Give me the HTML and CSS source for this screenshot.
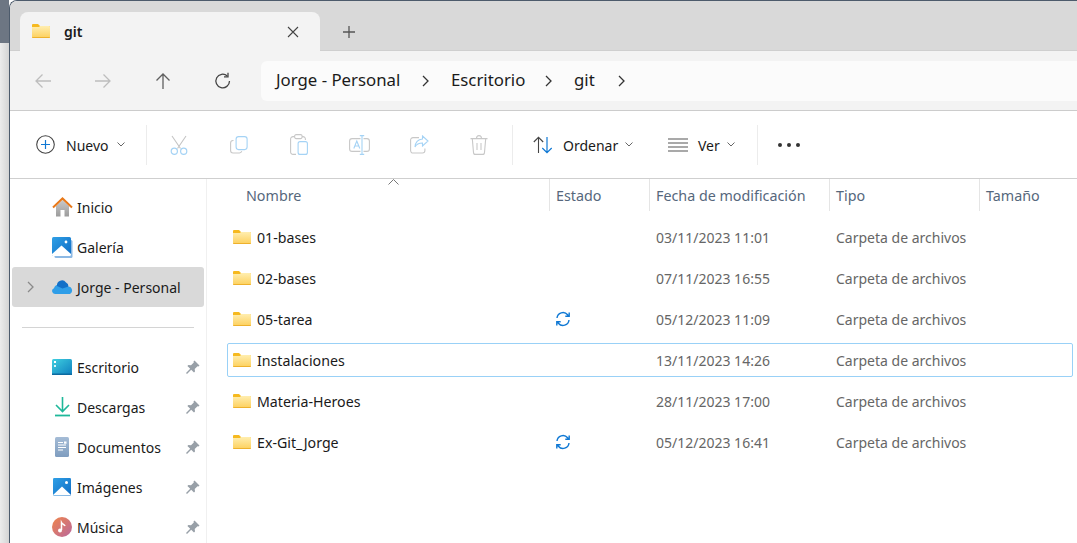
FILE: index.html
```html
<html>
  <head>
    <title>git</title>
    <meta name="viewport" content="width=device-width, initial-scale=1.0">
    <link rel="stylesheet" href="styles.css">
  </head>
  <body>
    <svg class="defs" width="0" height="0">
      <defs>
        <linearGradient id="folder-fill" x1="0" y1="0" x2="0" y2="1">
          <stop offset="0" stop-color="#ffeeb0"/>
          <stop offset="1" stop-color="#fdd05c"/>
        </linearGradient>
        <linearGradient id="home-fill" x1="0" y1="0" x2="0" y2="1">
          <stop offset="0" stop-color="#c9c9c9"/>
          <stop offset="1" stop-color="#9c9c9c"/>
        </linearGradient>
        <linearGradient id="sky-fill" x1="0" y1="0" x2="1" y2="1">
          <stop offset="0" stop-color="#2fa0e6"/>
          <stop offset="1" stop-color="#0f6cc4"/>
        </linearGradient>
        <linearGradient id="desk-fill" x1="0" y1="0" x2="1" y2="1">
          <stop offset="0" stop-color="#3fd0e0"/>
          <stop offset="1" stop-color="#0f7fbf"/>
        </linearGradient>
        <linearGradient id="doc-fill" x1="0" y1="0" x2="0" y2="1">
          <stop offset="0" stop-color="#a5bcd6"/>
          <stop offset="1" stop-color="#7f9dbf"/>
        </linearGradient>
        <linearGradient id="music-fill" x1="0" y1="0" x2="1" y2="1">
          <stop offset="0" stop-color="#f0854a"/>
          <stop offset="1" stop-color="#b9689f"/>
        </linearGradient>
        <symbol id="folder" viewBox="0 0 18 14">
          <path d="M0 1a1 1 0 0 1 1-1h5l2 2h9a1 1 0 0 1 1 1v3H0z" fill="#f6b91f"/>
          <path d="M0 3h7l1-1h9a1 1 0 0 1 1 1v10a1 1 0 0 1-1 1H1a1 1 0 0 1-1-1z" fill="url(#folder-fill)"/>
          <path d="M0 13h18a1 1 0 0 1-1 1H1a1 1 0 0 1-1-1z" fill="#eeb12c"/>
        </symbol>
        <symbol id="sync" viewBox="0 0 16 16">
          <path d="M2 7a6 6 0 0 1 10.6-3.2L14 5.2M14.2 1.4v3.9h-3.9M14 9a6 6 0 0 1-10.6 3.2L2 10.8M1.8 14.600v-3.900h3.900" fill="none" stroke="#0f78d4" stroke-width="1.400"/>
        </symbol>
        <symbol id="pin" viewBox="0 0 14 14">
          <path d="M8.500 0.500l5 5-1 1-1-.3-2.800 2.800.3 2.600-1 1-2.800-2.800L1 14l-1-1 4.200-4.200L1.400 6l1-1 2.600.3 2.800-2.800-.3-1z" fill="#98a0a8"/>
        </symbol>
        <symbol id="chev-down" viewBox="0 0 8 5">
          <path d="M.5.500L4 4 7.500.500" fill="none" stroke="#666" stroke-width="1"/>
        </symbol>
        <symbol id="chev-right" viewBox="0 0 7 12">
          <path d="M1 1l5 5-5 5" fill="none" stroke="#333" stroke-width="1.300"/>
        </symbol>
      </defs>
    </svg>

    <div class="desktop">
      <div class="desktop-top"></div>
      <div class="desktop-bottom"></div>
    </div>

    <div class="window">
      <div class="tabbar">
        <div class="tab">
          <svg class="tab-folder" width="18" height="14"><use href="#folder"/></svg>
          <span class="tab-title">git</span>
          <svg class="tab-close" width="12" height="12" viewBox="0 0 12 12"><path d="M1 1l10 10M11 1L1 11" stroke="#444" stroke-width="1.100"/></svg>
        </div>
        <svg class="tab-add" width="14" height="14" viewBox="0 0 14 14"><path d="M7 1v12M1 7h12" stroke="#555" stroke-width="1.300"/></svg>
      </div>

      <div class="navbar">
        <div class="nav-btn">
          <svg width="18" height="16" viewBox="0 0 18 16"><path d="M17 8H2M8.500 1.500L2 8l6.500 6.500" fill="none" stroke="#bdbdbd" stroke-width="1.300"/></svg>
        </div>
        <div class="nav-btn">
          <svg width="18" height="16" viewBox="0 0 18 16"><path d="M1 8h15M9.500 1.500L16 8l-6.500 6.500" fill="none" stroke="#bdbdbd" stroke-width="1.300"/></svg>
        </div>
        <div class="nav-btn">
          <svg width="16" height="18" viewBox="0 0 16 18"><path d="M8 17V2M1.500 8.500L8 2l6.500 6.500" fill="none" stroke="#5f5f5f" stroke-width="1.300"/></svg>
        </div>
        <div class="nav-btn">
          <svg width="18" height="18" viewBox="0 0 18 18"><path d="M15.500 9a6.800 6.800 0 1 1-2.200-5" fill="none" stroke="#444" stroke-width="1.300"/><path d="M14 .8v4h-4" fill="none" stroke="#444" stroke-width="1.300"/></svg>
        </div>
        <div class="address">
          <span class="crumb crumb-home">Jorge - Personal</span>
          <svg class="crumb-sep" width="7" height="12"><use href="#chev-right"/></svg>
          <span class="crumb crumb-desk">Escritorio</span>
          <svg class="crumb-sep" width="7" height="12"><use href="#chev-right"/></svg>
          <span class="crumb crumb-git">git</span>
          <svg class="crumb-sep" width="7" height="12"><use href="#chev-right"/></svg>
        </div>
      </div>

      <div class="toolbar">
        <div class="tool-new">
          <svg class="new-icon" width="19" height="19" viewBox="0 0 19 19"><circle cx="9.500" cy="9.500" r="8.800" fill="none" stroke="#444" stroke-width="1.100"/><path d="M9.500 5v9M5 9.500h9" stroke="#0f78d4" stroke-width="1.200"/></svg>
          <span class="tool-label label-new">Nuevo</span>
          <svg class="tool-chev" width="8" height="5"><use href="#chev-down"/></svg>
        </div>
        <div class="tool-sep"></div>
        <div class="tool-btn">
          <svg width="18" height="20" viewBox="0 0 18 20"><path d="M2 1l8.500 12.500M16 1L7.500 13.500" fill="none" stroke="#c4c4c4" stroke-width="1.100"/><circle cx="4.300" cy="16.300" r="3.100" fill="none" stroke="#a5d3f5" stroke-width="1.200"/><circle cx="13.700" cy="16.300" r="3.100" fill="none" stroke="#a5d3f5" stroke-width="1.200"/></svg>
        </div>
        <div class="tool-btn">
          <svg width="18" height="18" viewBox="0 0 18 18"><path d="M3.500 4.500h-.5A2.500 2.500 0 0 0 .6 7v7.500A2.500 2.500 0 0 0 3 17h6.500a2.500 2.500 0 0 0 2.300-1.800" fill="none" stroke="#c8c8c8" stroke-width="1.100"/><rect x="6.100" y=".6" width="11" height="13" rx="2.500" fill="#fff" stroke="#a5d3f5" stroke-width="1.100"/></svg>
        </div>
        <div class="tool-btn">
          <svg width="18" height="21" viewBox="0 0 18 21"><path d="M4.500 2.600H3A2.400 2.400 0 0 0 .6 5v13A2.400 2.400 0 0 0 3 20.400h3M12 2.600h1A2.400 2.400 0 0 1 15.400 5v1" fill="none" stroke="#c8c8c8" stroke-width="1.100"/><rect x="4.600" y=".6" width="7.500" height="4" rx="1.500" fill="#fff" stroke="#c8c8c8" stroke-width="1.100"/><rect x="8.100" y="7.600" width="9.300" height="12.800" rx="2" fill="#fff" stroke="#a5d3f5" stroke-width="1.100"/></svg>
        </div>
        <div class="tool-btn">
          <svg width="21" height="20" viewBox="0 0 21 20"><rect x=".6" y="3.600" width="19.800" height="12.800" rx="2.500" fill="none" stroke="#c8c8c8" stroke-width="1.100"/><path d="M13 .6v18.800M10.800.6h4.400M10.800 19.400h4.400" fill="none" stroke="#fff" stroke-width="3"/><path d="M13 .6v18.800M10.800.6h4.400M10.800 19.400h4.400" fill="none" stroke="#a5d3f5" stroke-width="1.100"/><path d="M4.800 13.500L7.800 6l3 7.500M5.800 11h4" fill="none" stroke="#a5d3f5" stroke-width="1.100"/></svg>
        </div>
        <div class="tool-btn">
          <svg width="19" height="19" viewBox="0 0 19 19"><path d="M9 2.600H3A2.400 2.400 0 0 0 .6 5v10.500A2.400 2.400 0 0 0 3 18h9.500a2.400 2.400 0 0 0 2.400-2.400v-2" fill="none" stroke="#c8c8c8" stroke-width="1.100"/><path d="M12.500 1l5.500 5-5.500 5V8c-3.500 0-6 1-7.500 4 .3-4.500 3-7.500 7.500-8z" fill="#fff" stroke="#a5d3f5" stroke-width="1.100"/></svg>
        </div>
        <div class="tool-btn">
          <svg width="18" height="20" viewBox="0 0 18 20"><path d="M.5 3.600h17M6.500 3.600c0-1.800 1-3 2.500-3s2.500 1.200 2.500 3M2.300 3.600l1.200 13.800a2 2 0 0 0 2 2h7a2 2 0 0 0 2-2l1.200-13.800M7 8v7M11 8v7" fill="none" stroke="#c8c8c8" stroke-width="1.100"/></svg>
        </div>
        <div class="tool-sep"></div>
        <div class="tool-group group-sort">
          <svg width="20" height="18" viewBox="0 0 20 18"><path d="M5.500 17V1.500M.8 6L5.500 1.300 10.200 6" fill="none" stroke="#444" stroke-width="1.100"/><path d="M14 1v15.500M9.300 12l4.700 4.700 4.700-4.700" fill="none" stroke="#0f78d4" stroke-width="1.200"/></svg>
          <span class="tool-label label-sort">Ordenar</span>
          <svg class="tool-chev" width="8" height="5"><use href="#chev-down"/></svg>
        </div>
        <div class="tool-group group-view">
          <svg width="20" height="14" viewBox="0 0 20 14"><path d="M0 1h20M0 5h20M0 9h20M0 13h20" stroke="#555" stroke-width="1.100"/></svg>
          <span class="tool-label label-view">Ver</span>
          <svg class="tool-chev" width="8" height="5"><use href="#chev-down"/></svg>
        </div>
        <div class="tool-sep"></div>
        <div class="tool-more"><i></i><i></i><i></i></div>
      </div>

      <div class="main">
        <div class="sidebar">
          <div class="side-item">
            <svg width="21" height="20" viewBox="0 0 21 20"><path d="M4 9l6.500-6L17 9v10.400H12.500V13h-4v6.400H4z" fill="url(#home-fill)"/><path d="M1 10.500l9.500-9 9.500 9" fill="none" stroke="#e8791a" stroke-width="2"/></svg>
            <span class="side-label">Inicio</span>
          </div>
          <div class="side-item">
            <svg width="21" height="21" viewBox="0 0 21 21"><rect x="2.500" y="3" width="18" height="18" rx="1.500" fill="#8db9e4"/><rect x="0" y="0" width="19" height="19" rx="1.500" fill="url(#sky-fill)"/><path d="M0 17l9.500-8.500L19 17v1a1 1 0 0 1-1 1H1a1 1 0 0 1-1-1z" fill="#fff"/><circle cx="14" cy="5" r="1.400" fill="#fff"/></svg>
            <span class="side-label">Galería</span>
          </div>
          <div class="side-item side-current">
            <svg class="side-expand" width="7" height="12" viewBox="0 0 7 12"><path d="M1 1l5 5-5 5" fill="none" stroke="#8a8a8a" stroke-width="1.300"/></svg>
            <svg width="21" height="14" viewBox="0 0 21 14"><path d="M3 14a3 3 0 0 1-1-5.800A4 4 0 0 1 7 5a5 5 0 0 1 9 1.500A4 4 0 0 1 18 14z" fill="#2f9ee8"/><path d="M5 6a5 5 0 0 1 9-3.500 4.500 4.500 0 0 1 2.500 4l-6 2z" fill="#1270c8"/></svg>
            <span class="side-label">Jorge - Personal</span>
          </div>
          <div class="side-divider"></div>
          <div class="side-item">
            <svg width="21" height="16" viewBox="0 0 21 16"><rect width="20" height="16" rx="1.500" fill="url(#desk-fill)"/><rect x="2" y="2" width="2" height="2" fill="#fff"/><rect x="2" y="6" width="2" height="2" fill="#d8f6fa"/><rect y="14.500" width="20" height="1.500" fill="#0c6aa0"/></svg>
            <span class="side-label">Escritorio</span>
            <svg class="side-pin" width="14" height="14"><use href="#pin"/></svg>
          </div>
          <div class="side-item">
            <svg width="21" height="20" viewBox="0 0 21 20"><path d="M10.500 0v13.500M4 8l6.500 6.500L17 8" fill="none" stroke="#1fb89a" stroke-width="1.600"/><path d="M3 18.500h15" stroke="#1fb89a" stroke-width="1.800"/></svg>
            <span class="side-label">Descargas</span>
            <svg class="side-pin" width="14" height="14"><use href="#pin"/></svg>
          </div>
          <div class="side-item">
            <svg width="21" height="20" viewBox="0 0 21 20"><rect x="3" y="0" width="14" height="20" rx="1.500" fill="url(#doc-fill)"/><path d="M6 5.500h5M6 8h8M6 10.500h8M6 13h5" stroke="#fff" stroke-width="1.100"/><rect x="12" y="4.500" width="2.500" height="2.200" fill="#fff"/></svg>
            <span class="side-label">Documentos</span>
            <svg class="side-pin" width="14" height="14"><use href="#pin"/></svg>
          </div>
          <div class="side-item">
            <svg width="21" height="19" viewBox="0 0 21 19"><rect x="1" y="0" width="18" height="18" rx="1.200" fill="url(#sky-fill)"/><path d="M1 17l9-8.500L19 17v.5H1z" fill="#fff"/><circle cx="14.500" cy="4.500" r="1.500" fill="#fff"/></svg>
            <span class="side-label">Imágenes</span>
            <svg class="side-pin" width="14" height="14"><use href="#pin"/></svg>
          </div>
          <div class="side-item">
            <svg width="21" height="20" viewBox="0 0 21 20"><circle cx="10" cy="10" r="10" fill="url(#music-fill)"/><path d="M9.500 13V5.500c1 1.800 3 2 3.500 3.500" fill="none" stroke="#fff" stroke-width="1.500"/><circle cx="8" cy="13.500" r="2" fill="#fff"/></svg>
            <span class="side-label">Música</span>
            <svg class="side-pin" width="14" height="14"><use href="#pin"/></svg>
          </div>
        </div>

        <div class="files">
          <div class="files-head">
            <div class="head-cell head-name">Nombre
              <svg class="sort-caret" width="11" height="6" viewBox="0 0 11 6"><path d="M.5 5.500l5-5 5 5" fill="none" stroke="#777" stroke-width="1"/></svg>
            </div>
            <div class="head-cell">Estado</div>
            <div class="head-cell">Fecha de modificación</div>
            <div class="head-cell">Tipo</div>
            <div class="head-cell">Tamaño</div>
          </div>

          <div class="file-row">
            <div class="file-name"><svg width="18" height="14"><use href="#folder"/></svg><span>01-bases</span></div>
            <div class="file-state"></div>
            <div class="file-meta">03/11/2023 11:01</div>
            <div class="file-meta">Carpeta de archivos</div>
          </div>
          <div class="file-row">
            <div class="file-name"><svg width="18" height="14"><use href="#folder"/></svg><span>02-bases</span></div>
            <div class="file-state"></div>
            <div class="file-meta">07/11/2023 16:55</div>
            <div class="file-meta">Carpeta de archivos</div>
          </div>
          <div class="file-row">
            <div class="file-name"><svg width="18" height="14"><use href="#folder"/></svg><span>05-tarea</span></div>
            <div class="file-state"><svg width="16" height="16"><use href="#sync"/></svg></div>
            <div class="file-meta">05/12/2023 11:09</div>
            <div class="file-meta">Carpeta de archivos</div>
          </div>
          <div class="file-row file-focus">
            <div class="file-name"><svg width="18" height="14"><use href="#folder"/></svg><span>Instalaciones</span></div>
            <div class="file-state"></div>
            <div class="file-meta">13/11/2023 14:26</div>
            <div class="file-meta">Carpeta de archivos</div>
          </div>
          <div class="file-row">
            <div class="file-name"><svg width="18" height="14"><use href="#folder"/></svg><span>Materia-Heroes</span></div>
            <div class="file-state"></div>
            <div class="file-meta">28/11/2023 17:00</div>
            <div class="file-meta">Carpeta de archivos</div>
          </div>
          <div class="file-row">
            <div class="file-name"><svg width="18" height="14"><use href="#folder"/></svg><span>Ex-Git_Jorge</span></div>
            <div class="file-state"><svg width="16" height="16"><use href="#sync"/></svg></div>
            <div class="file-meta">05/12/2023 16:41</div>
            <div class="file-meta">Carpeta de archivos</div>
          </div>
        </div>
      </div>
    </div>
  </body>
</html>
```

FILE: styles.css
```css
html, body {
  margin: 0;
  height: 100%;
  overflow: hidden;
}

body {
  display: flex;
  font-family: "Noto Sans", "Open Sans", sans-serif;
  color: #1a1a1a;
  background: #fff;
}

svg {
  display: block;
  flex: none;
}

.defs {
  position: absolute;
}

/* desktop strip on the left of the window */
.desktop {
  width: 9px;
  flex: none;
  display: flex;
  flex-direction: column;
}

.desktop-top {
  height: 43px;
  background: #6d7683;
}

.desktop-bottom {
  flex: 1;
  background: linear-gradient(90deg, #ececec, #d4d4d4);
}

.window {
  flex: 1;
  min-width: 0;
  display: flex;
  flex-direction: column;
  border-top: 1px solid #4d5b6c;
  border-left: 1px solid #4d5b6c;
  border-top-left-radius: 8px;
  overflow: hidden;
}

/* tabs */
.tabbar {
  height: 50px;
  flex: none;
  box-sizing: border-box;
  display: flex;
  align-items: flex-end;
  padding-left: 10px;
  background: #d9d9d9;
  border-bottom: 1px solid #cfcfcf;
}

.tab {
  width: 300px;
  height: 39px;
  margin-bottom: -1px;
  box-sizing: border-box;
  display: flex;
  align-items: center;
  padding: 0 21px 0 12px;
  background: #f3f3f3;
  border-radius: 8px 8px 0 0;
}

.tab-folder {
  margin-top: -2px;
}

.tab-title {
  flex: 1;
  margin-left: 14px;
  font-size: 14px;
  font-weight: 600;
}

.tab-add {
  margin: 0 0 11px 22px;
}

/* back, forward, up, refresh + address */
.navbar {
  height: 60px;
  flex: none;
  box-sizing: border-box;
  display: flex;
  align-items: center;
  padding-left: 3px;
  background: #f3f3f3;
  border-bottom: 1px solid #cccccc;
}

.nav-btn {
  width: 60px;
  display: flex;
  justify-content: center;
}

.address {
  flex: 1;
  height: 40px;
  margin-left: 8px;
  display: flex;
  align-items: center;
  padding-left: 15px;
  background: #fbfbfb;
  border-radius: 6px 0 0 6px;
  font-size: 16.8px;
}

.crumb {
  white-space: nowrap;
  padding-bottom: 2px;
}

.crumb-home {
  width: 146px;
}

.crumb-desk {
  width: 94px;
}

.crumb-git {
  width: 44px;
}

.crumb-sep {
  margin-right: 22px;
}

/* command bar */
.toolbar {
  height: 68px;
  flex: none;
  box-sizing: border-box;
  display: flex;
  align-items: center;
  border-bottom: 1px solid #cfcfcf;
  font-size: 14px;
}

.tool-new {
  width: 136px;
  box-sizing: border-box;
  display: flex;
  align-items: center;
  padding-left: 26px;
}

.tool-label {
  white-space: nowrap;
  padding-top: 1px;
}

.label-new {
  width: 51px;
  margin-left: 11px;
}

.tool-sep {
  width: 1px;
  height: 40px;
  background: #ececec;
}

.tool-btn {
  width: 60px;
  display: flex;
  justify-content: center;
}

.tool-btn:nth-child(3) {
  margin-left: 2px;
}

.tool-btn:nth-child(8) {
  margin-right: 3px;
}

.tool-group {
  display: flex;
  align-items: center;
}

.group-sort {
  margin-left: 20px;
}

.label-sort {
  width: 62px;
  margin-left: 10px;
}

.group-view {
  margin-left: 35px;
}

.label-view {
  width: 29px;
  margin-left: 10px;
}

.group-view + .tool-sep {
  margin-left: 22px;
}

.tool-more {
  margin-left: 20px;
  display: flex;
  gap: 5px;
}

.tool-more i {
  width: 4px;
  height: 4px;
  border-radius: 50%;
  background: #333;
}

/* sidebar and list */
.main {
  flex: 1;
  min-height: 0;
  display: flex;
}

.sidebar {
  width: 197px;
  flex: none;
  box-sizing: border-box;
  padding: 8px 0 0 2px;
  border-right: 1px solid #f0f0f0;
  font-size: 14px;
}

.side-item {
  position: relative;
  width: 192px;
  height: 40px;
  box-sizing: border-box;
  display: flex;
  align-items: center;
  padding-left: 40px;
  border-radius: 3px;
}

.side-current {
  background: #d9d9d9;
}

.side-expand {
  position: absolute;
  left: 15px;
  top: 14px;
}

.side-label {
  flex: 1;
  margin-left: 4px;
  white-space: nowrap;
}

.side-pin {
  margin-right: 4px;
}

.side-divider {
  height: 1px;
  margin: 20px 0 19px 10px;
  width: 172px;
  background: #d4d4d4;
}

.files {
  flex: 1;
  min-width: 0;
  font-size: 14px;
}

.files-head,
.file-row {
  display: grid;
  grid-template-columns: 342px 100px 180px 150px 1fr;
}

.files-head {
  height: 32px;
  margin-bottom: 9px;
  font-size: 14.3px;
  color: #56677c;
}

.head-cell {
  position: relative;
  display: flex;
  align-items: center;
  padding-left: 6px;
  border-left: 1px solid #e5e5e5;
  white-space: nowrap;
}

.head-name {
  padding-left: 39px;
  border-left: 0;
}

.sort-caret {
  position: absolute;
  left: 181px;
  top: 0;
}

.file-row {
  height: 34px;
  margin: 0 4px 7px 20px;
  grid-template-columns: 321px 100px 180px 1fr;
  box-sizing: border-box;
  align-items: center;
  border: 1px solid transparent;
  border-radius: 2px;
}

.file-focus {
  border-color: #99d1f7;
}

.file-name {
  display: flex;
  align-items: center;
  padding-left: 5px;
  font-size: 14.2px;
}

.file-name span {
  margin-left: 6px;
}

.file-state {
  padding-left: 6px;
}

.file-meta {
  padding-left: 7px;
  color: #666;
  white-space: nowrap;
}
```
